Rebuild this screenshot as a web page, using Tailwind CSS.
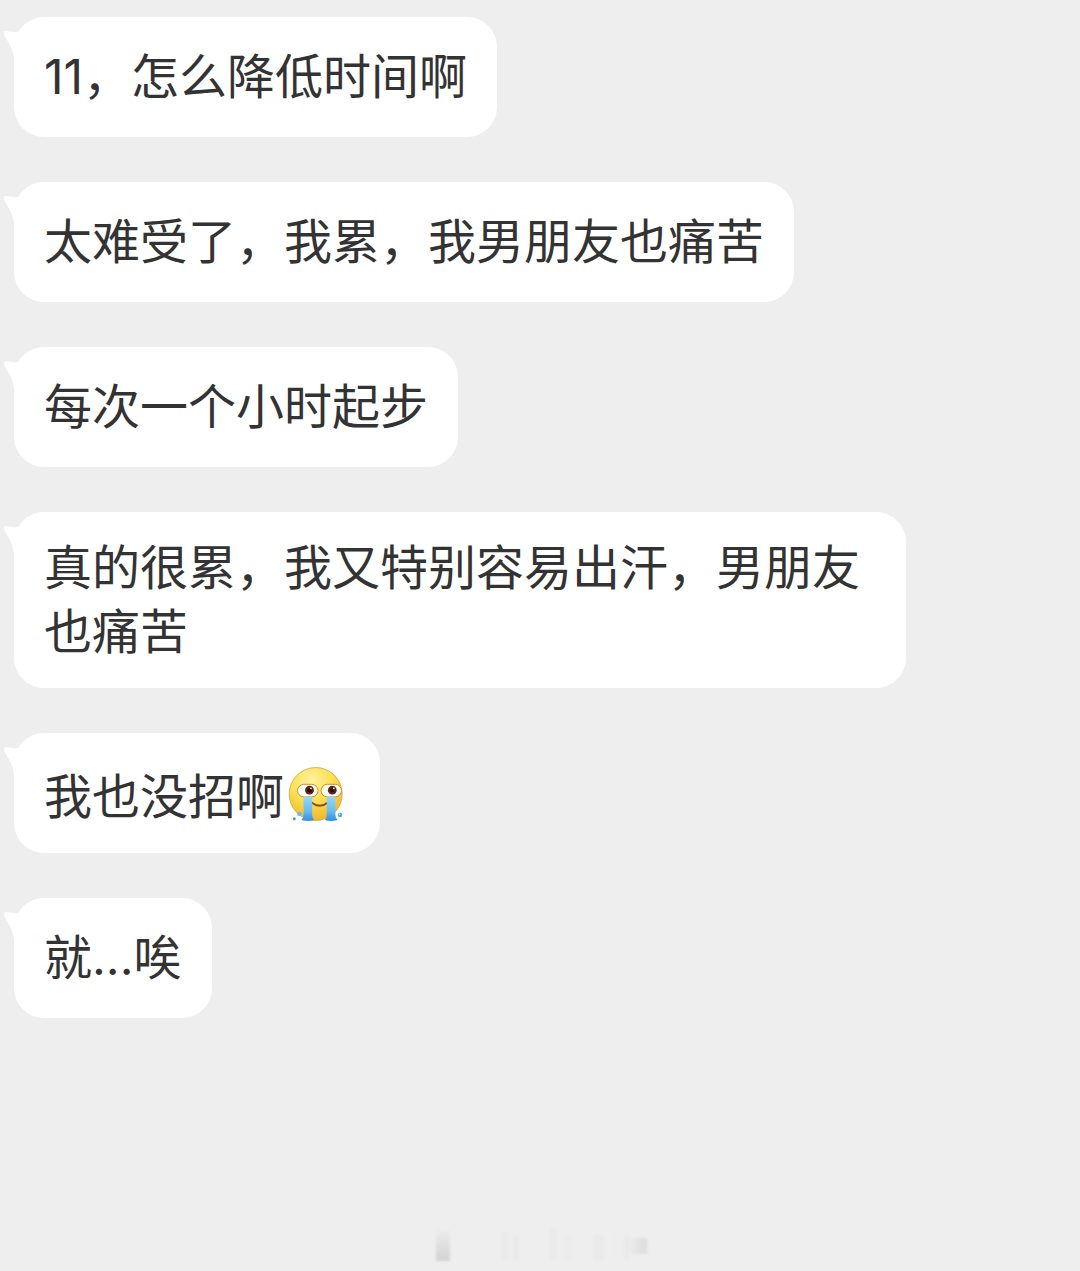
<!DOCTYPE html>
<html lang="zh-CN">
<head>
    <meta charset="UTF-8">
    <meta name="viewport" content="width=device-width, initial-scale=1.0">
    <title>聊天</title>
    <script src="https://cdn.jsdelivr.net/npm/@tailwindcss/browser@4"></script>
</head>
<body class="min-h-screen flex flex-col justify-between bg-[#eeeeee] text-[#333333] font-['Inter','Noto_Sans_CJK_SC',sans-serif]">
    <!-- Shared tail shape for every bubble -->
    <svg class="hidden">
        <symbol id="tail" viewBox="0 0 20 36">
            <path d="M2.500 0C6 1 10 1.400 14 1L20 0V36H10.500C10.500 26 8.500 18 4.500 11.500L0.400 4.500C-1 2 0 0 2.500 0Z" fill="#fff"/>
        </symbol>
    </svg>

    <main class="pt-[17px] pl-[14px] pr-4">
        <ul class="flex flex-col items-start gap-[45px] text-[48px] leading-[64px]">
            <li class="relative flex items-center min-h-[120px] max-w-[892px] py-6 px-[30px] bg-white rounded-[30px]">
                <svg class="absolute top-[14px] -left-[10px] w-5 h-9" aria-hidden="true"><use href="#tail"/></svg>
                <p>11，怎么降低时间啊</p>
            </li>
            <li class="relative flex items-center min-h-[120px] max-w-[892px] py-6 px-[30px] bg-white rounded-[30px]">
                <svg class="absolute top-[14px] -left-[10px] w-5 h-9" aria-hidden="true"><use href="#tail"/></svg>
                <p>太难受了，我累，我男朋友也痛苦</p>
            </li>
            <li class="relative flex items-center min-h-[120px] max-w-[892px] py-6 px-[30px] bg-white rounded-[30px]">
                <svg class="absolute top-[14px] -left-[10px] w-5 h-9" aria-hidden="true"><use href="#tail"/></svg>
                <p>每次一个小时起步</p>
            </li>
            <li class="relative flex items-center min-h-[120px] max-w-[892px] py-6 px-[30px] bg-white rounded-[30px]">
                <svg class="absolute top-[14px] -left-[10px] w-5 h-9" aria-hidden="true"><use href="#tail"/></svg>
                <p>真的很累，我又特别容易出汗，男朋友也痛苦</p>
            </li>
            <li class="relative flex items-center min-h-[120px] max-w-[892px] py-6 px-[30px] bg-white rounded-[30px]">
                <svg class="absolute top-[14px] -left-[10px] w-5 h-9" aria-hidden="true"><use href="#tail"/></svg>
                <p>我也没招啊<svg class="inline-block w-[60px] h-[60px] ml-1 mr-0.5 mt-2 align-[-11px]" viewBox="0 0 60 60" role="img" aria-label="大哭">
                    <defs>
                        <radialGradient id="face" cx="0.42" cy="0.25" r="0.78">
                            <stop offset="0" stop-color="#fdf3a0"/>
                            <stop offset="0.5" stop-color="#fbe052"/>
                            <stop offset="1" stop-color="#f0b429"/>
                        </radialGradient>
                        <linearGradient id="tear" x1="0" y1="0" x2="0" y2="1">
                            <stop offset="0" stop-color="#9ad6f8"/>
                            <stop offset="0.6" stop-color="#66bdf2"/>
                            <stop offset="1" stop-color="#2f8fe0"/>
                        </linearGradient>
                    </defs>
                    <circle cx="27.700" cy="29" r="26.500" fill="url(#face)" stroke="#cfa63c" stroke-width="0.800"/>
                    <path d="M23.500 37.500Q31.700 44 40 37.500" fill="none" stroke="#8a4a12" stroke-width="1.800" stroke-linecap="round"/>
                    <rect x="9.500" y="19.300" width="20.500" height="12.600" rx="6.300" fill="#fffdf6" stroke="#c9922a" stroke-width="1"/>
                    <rect x="33" y="19.300" width="20.500" height="12.600" rx="6.300" fill="#fffdf6" stroke="#c9922a" stroke-width="1"/>
                    <circle cx="21.500" cy="25.200" r="4.400" fill="#5a2412"/>
                    <circle cx="44.300" cy="25.200" r="4.400" fill="#5a2412"/>
                    <circle cx="21.500" cy="25.200" r="2" fill="#230c08"/>
                    <circle cx="44.300" cy="25.200" r="2" fill="#230c08"/>
                    <circle cx="23" cy="23.300" r="0.900" fill="#fff"/>
                    <circle cx="45.800" cy="23.300" r="0.900" fill="#fff"/>
                    <path d="M15.500 31.200Q19.800 32.600 24.200 31.200V50Q24.200 53 26 54.300Q26 56 20 56Q13.500 56 13.500 54.300Q15.500 53 15.500 50Z" fill="url(#tear)"/>
                    <path d="M38.800 31.200Q43 32.600 47.400 31.200V50Q47.400 53 49.500 54.300Q49.500 56 43 56Q37 56 37 54.300Q38.800 53 38.800 50Z" fill="url(#tear)"/>
                    <circle cx="6.300" cy="53.700" r="1.500" fill="#4c93d0"/>
                    <circle cx="11.500" cy="49" r="2.300" fill="#74b9e4"/>
                    <circle cx="52" cy="50" r="2.200" fill="#4ca4e4"/>
                    <circle cx="51.600" cy="49.300" r="0.900" fill="#c8e8fa"/>
                </svg></p>
            </li>
            <li class="relative flex items-center min-h-[120px] max-w-[892px] py-6 px-[30px] bg-white rounded-[30px]">
                <svg class="absolute top-[14px] -left-[10px] w-5 h-9" aria-hidden="true"><use href="#tail"/></svg>
                <p>就...唉</p>
            </li>
        </ul>
    </main>

    <!-- Faint smudges at the page foot -->
    <footer class="flex justify-center pb-[9px]" aria-hidden="true">
        <svg class="w-[218px] h-9" viewBox="0 0 218 36">
            <defs>
                <linearGradient id="smudgeDown" x1="0" y1="0" x2="0" y2="1">
                    <stop offset="0" stop-color="#ececec"/>
                    <stop offset="1" stop-color="#d2d2d2"/>
                </linearGradient>
                <linearGradient id="smudgeRight" x1="0" y1="0" x2="1" y2="0">
                    <stop offset="0" stop-color="#ebebeb"/>
                    <stop offset="1" stop-color="#dcdcdc"/>
                </linearGradient>
                <filter id="soft" x="-20%" y="-20%" width="140%" height="140%">
                    <feGaussianBlur stdDeviation="1.5"/>
                </filter>
            </defs>
            <g filter="url(#soft)">
                <rect x="5" y="4" width="14" height="31" fill="url(#smudgeDown)"/>
                <rect x="71" y="6" width="6" height="28" fill="#eaeaea"/>
                <rect x="82" y="10" width="6" height="24" fill="#e9e9e9"/>
                <rect x="119" y="2" width="7" height="32" fill="#eaeaea"/>
                <rect x="134" y="10" width="6" height="24" fill="#ebebeb"/>
                <rect x="162" y="9" width="11" height="25" fill="#eaeaea"/>
                <rect x="178" y="6" width="2" height="27" fill="#f1f1f1"/>
                <rect x="193" y="10" width="5" height="23" fill="#e9e9e9"/>
                <rect x="198" y="12" width="18" height="16" fill="url(#smudgeRight)"/>
            </g>
        </svg>
    </footer>
</body>
</html>
